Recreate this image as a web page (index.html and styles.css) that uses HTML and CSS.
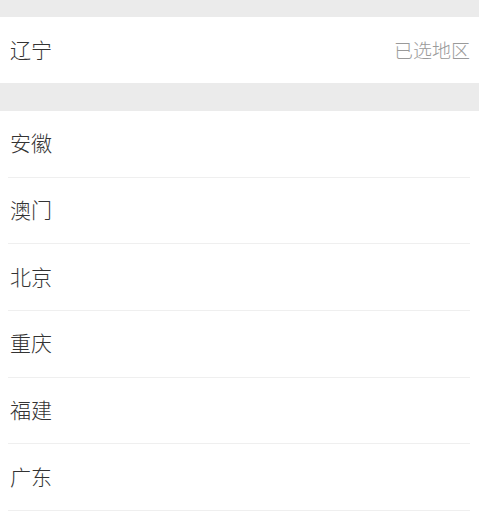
FILE: index.html
```html
<!DOCTYPE html>
<html lang="zh">
<head>
<meta charset="utf-8">
<link rel="stylesheet" href="styles.css">
</head>
<body>
<div class="gap gap-top"></div>
<div class="selected">
  <span class="name">辽宁</span>
  <span class="hint">已选地区</span>
</div>
<div class="gap gap-mid"></div>
<ul class="list">
  <li class="item"><span class="name">安徽</span></li>
  <li class="item"><span class="name">澳门</span></li>
  <li class="item"><span class="name">北京</span></li>
  <li class="item"><span class="name">重庆</span></li>
  <li class="item"><span class="name">福建</span></li>
  <li class="item"><span class="name">广东</span></li>
</ul>
</body>
</html>
```
FILE: styles.css
```css
html, body {
  margin: 0;
  padding: 0;
  background: #fff;
  font-family: "Noto Sans CJK SC", "Noto Sans", sans-serif;
}
.gap {
  background: #ebebeb;
}
.gap-top { height: 17px; }
.gap-mid { height: 28px; }
.selected {
  height: 66px;
  box-sizing: border-box;
  display: flex;
  align-items: center;
  justify-content: space-between;
  padding: 0 9px 2px 10px;
}
.name {
  font-size: 21px;
  font-weight: 300;
  color: #333;
  line-height: 1;
}
.hint {
  font-size: 19px;
  font-weight: 300;
  color: #9a9a9a;
  line-height: 1;
}
.list {
  list-style: none;
  margin: 0;
  padding: 0;
}
.item {
  height: 66.7px;
  box-sizing: border-box;
  margin: 0 9px 0 8px;
  padding: 0 0 2px 2px;
  display: flex;
  align-items: center;
  border-bottom: 1px solid #efefef;
}
```
